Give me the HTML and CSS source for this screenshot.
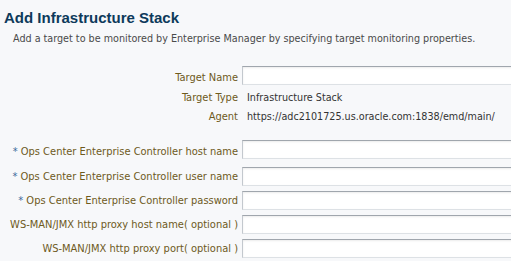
FILE: index.html
```html
<!DOCTYPE html>
<html lang="en">
<head>
  <meta charset="UTF-8">
  <title>Add Infrastructure Stack</title>
  <link rel="stylesheet" href="styles.css">
</head>
<body>
  <div class="page">
    <h1>Add Infrastructure Stack</h1>
    <p class="intro">Add a target to be monitored by Enterprise Manager by specifying target monitoring properties.</p>

    <!-- Target properties -->
    <div class="form">
      <label class="label" for="targetName">Target Name</label>
      <input class="field" type="text" id="targetName">

      <span class="label text-row">Target Type</span>
      <span class="value text-row">Infrastructure Stack</span>

      <span class="label text-row">Agent</span>
      <span class="value text-row">https://adc2101725.us.oracle.com:1838/emd/main/</span>
    </div>

    <!-- Ops Center credentials -->
    <div class="form props">
      <label class="label" for="ecHost"><span class="req">*</span> Ops Center Enterprise Controller host name</label>
      <input class="field" type="text" id="ecHost">

      <label class="label" for="ecUser"><span class="req">*</span> Ops Center Enterprise Controller user name</label>
      <input class="field" type="text" id="ecUser">

      <label class="label" for="ecPass"><span class="req">*</span> Ops Center Enterprise Controller password</label>
      <input class="field" type="password" id="ecPass">

      <label class="label" for="proxyHost">WS-MAN/JMX http proxy host name( optional )</label>
      <input class="field" type="text" id="proxyHost">

      <label class="label" for="proxyPort">WS-MAN/JMX http proxy port( optional )</label>
      <input class="field" type="text" id="proxyPort">
    </div>
  </div>
</body>
</html>
```

FILE: styles.css
```css
body {
  margin: 0;
  background-color: #f7f8fa;
  font-family: "DejaVu Sans Condensed", "DejaVu Sans", Tahoma, sans-serif;
  font-size: 10.7px;
  color: #333;
  overflow: hidden;
}
.page {
  padding: 8px 0 0 0;
}
h1 {
  margin: 0 0 0 4px;
  font-family: "Liberation Sans", Arial, sans-serif;
  font-size: 15px;
  font-weight: bold;
  color: #0d3a5b;
  line-height: 20px;
}
.intro {
  margin: 3px 0 0 13px;
  color: #4a4a4a;
  line-height: 16px;
  white-space: nowrap;
}
.form {
  display: grid;
  grid-template-columns: 238px 300px;
  column-gap: 4px;
  align-items: center;
  margin-top: 19px;
}
.form.props {
  margin-top: 14px;
  row-gap: 5px;
}
.label {
  text-align: right;
  font-size: 11px;
  color: #6e5a1c;
  white-space: nowrap;
}
.text-row {
  line-height: 19px;
}
.value {
  padding-left: 5px;
  color: #333;
  white-space: nowrap;
}
.req {
  color: #3d6a9a;
}
.field {
  box-sizing: border-box;
  width: 300px;
  height: 19px;
  margin: 0;
  padding: 1px 4px;
  background: #fff;
  border: 1px solid #c3c8ce;
  border-top-color: #a0a6ad;
  border-bottom-color: #dde1e5;
  border-radius: 0;
  box-shadow: inset 0 1px 2px rgba(0, 0, 0, 0.08);
  font: inherit;
}
.form .field:first-of-type {
  margin-bottom: 3px;
}
```
